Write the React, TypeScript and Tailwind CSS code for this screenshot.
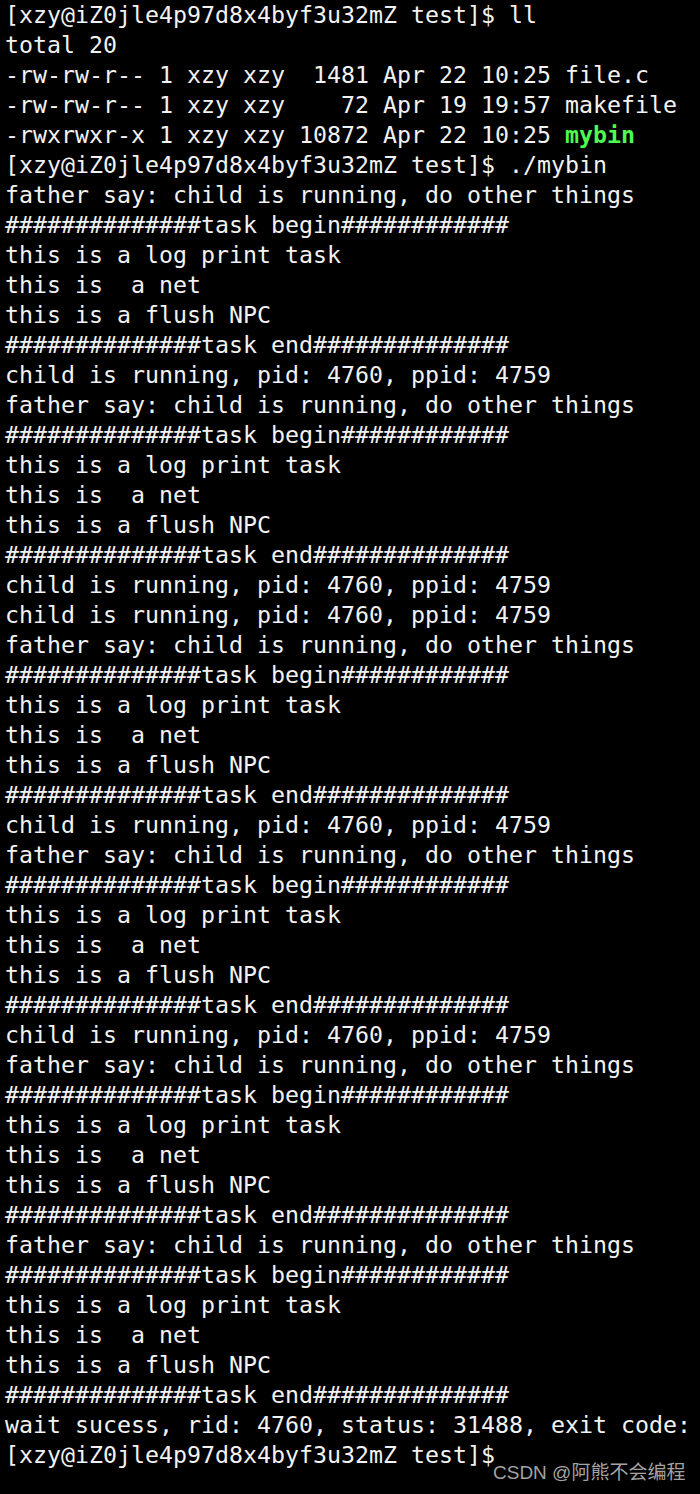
import React from "react";

const prompt = "[xzy@iZ0jle4p97d8x4byf3u32mZ test]$";

const block = [
  "father say: child is running, do other things",
  "##############task begin############",
  "this is a log print task",
  "this is  a net",
  "this is a flush NPC",
  "##############task end##############",
];
const child = "child is running, pid: 4760, ppid: 4759";

const lines: string[] = [
  ...block,
  child,
  ...block,
  child,
  child,
  ...block,
  child,
  ...block,
  child,
  ...block,
  ...block,
  "wait sucess, rid: 4760, status: 31488, exit code:",
];

export default function App() {
  return (
    <div className="relative min-h-[1494px] w-[700px] overflow-hidden bg-black">
      <div
        className="whitespace-pre pl-[5px] text-[23.25px] leading-[30px] text-[#f2f2f2]"
        style={{ fontFamily: '"DejaVu Sans Mono", "Liberation Mono", monospace' }}
      >
        <div>{prompt} ll</div>
        <div>total 20</div>
        <div>-rw-rw-r-- 1 xzy xzy  1481 Apr 22 10:25 file.c</div>
        <div>-rw-rw-r-- 1 xzy xzy    72 Apr 19 19:57 makefile</div>
        <div>
          -rwxrwxr-x 1 xzy xzy 10872 Apr 22 10:25{" "}
          <span className="font-bold text-[#4dfa4d]">mybin</span>
        </div>
        <div>{prompt} ./mybin</div>
        {lines.map((l, i) => (
          <div key={i}>{l}</div>
        ))}
        <div>{prompt}</div>
      </div>
      <div
        className="absolute left-[493px] top-[1460px] text-[19px] leading-[26px] text-[#a3a3a3]"
        style={{ fontFamily: 'Arial, "Liberation Sans", "Noto Sans CJK SC", sans-serif' }}
      >
        CSDN @阿熊不会编程
      </div>
    </div>
  );
}
